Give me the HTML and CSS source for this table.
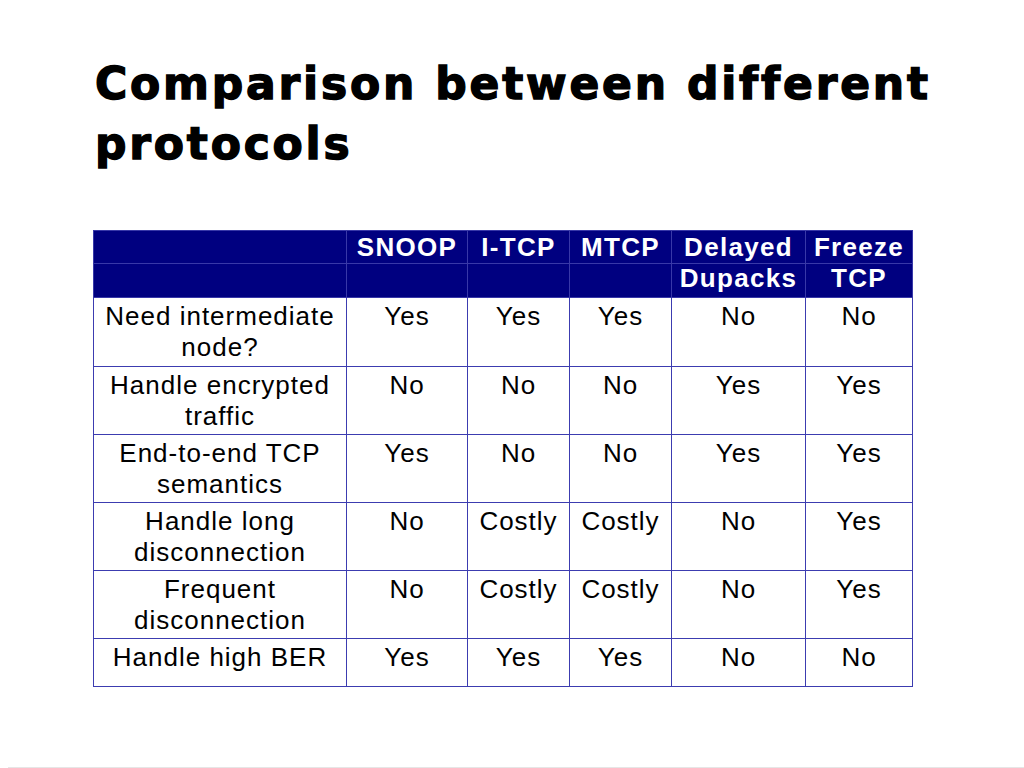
FILE: index.html
```html
<!DOCTYPE html>
<html>
<head>
<meta charset="utf-8">
<link rel="stylesheet" href="styles.css">
</head>
<body>
<div class="slide">
  <h1 class="title">Comparison between different<br>protocols</h1>
  <table class="cmp">
    <colgroup>
      <col class="c0"><col class="c1"><col class="c2"><col class="c3"><col class="c4"><col class="c5">
    </colgroup>
    <thead>
      <tr class="h1">
        <th></th><th>SNOOP</th><th>I-TCP</th><th>MTCP</th><th>Delayed</th><th>Freeze</th>
      </tr>
      <tr class="h2">
        <th></th><th></th><th></th><th></th><th>Dupacks</th><th>TCP</th>
      </tr>
    </thead>
    <tbody>
      <tr class="r2 first"><td>Need intermediate<br>node?</td><td>Yes</td><td>Yes</td><td>Yes</td><td>No</td><td>No</td></tr>
      <tr class="r2"><td>Handle encrypted<br>traffic</td><td>No</td><td>No</td><td>No</td><td>Yes</td><td>Yes</td></tr>
      <tr class="r2"><td>End-to-end TCP<br>semantics</td><td>Yes</td><td>No</td><td>No</td><td>Yes</td><td>Yes</td></tr>
      <tr class="r2"><td>Handle long<br>disconnection</td><td>No</td><td>Costly</td><td>Costly</td><td>No</td><td>Yes</td></tr>
      <tr class="r2"><td>Frequent<br>disconnection</td><td>No</td><td>Costly</td><td>Costly</td><td>No</td><td>Yes</td></tr>
      <tr class="r1"><td>Handle high BER</td><td>Yes</td><td>Yes</td><td>Yes</td><td>No</td><td>No</td></tr>
    </tbody>
  </table>
</div>
<div class="footer-line"></div>
</body>
</html>
```

FILE: styles.css
```css
html, body {
  margin: 0;
  padding: 0;
  background: #ffffff;
}
.slide {
  width: 1024px;
  height: 767px;
  box-sizing: border-box;
  padding-left: 93px;
  padding-top: 54px;
}
.title {
  margin: 0 0 56px 2px;
  font-family: "DejaVu Sans", "Liberation Sans", sans-serif;
  font-weight: 700;
  font-size: 44px;
  line-height: 60px;
  letter-spacing: 2.8px;
  color: #000000;
  -webkit-text-stroke: 1.4px #000;
  white-space: nowrap;
}
.cmp {
  border-collapse: collapse;
  table-layout: fixed;
  width: 819px;
  font-family: "Liberation Sans", Arial, sans-serif;
  font-size: 26px;
  line-height: 31px;
  letter-spacing: 1px;
  color: #000;
}
.c0 { width: 253px; }
.c1 { width: 121px; }
.c2 { width: 102px; }
.c3 { width: 102px; }
.c4 { width: 134px; }
.c5 { width: 107px; }
.cmp th {
  background: #000080;
  color: #ffffff;
  font-weight: 700;
  letter-spacing: 1.3px;
  border: 1px solid #3838a8;
  padding: 0 2px;
  text-align: center;
  vertical-align: top;
  white-space: nowrap;
}
.cmp .h1 th {
  height: 30px;
  padding-top: 1px;
  line-height: 31px;
}
.cmp .h2 th {
  height: 33px;
  line-height: 29px;
  vertical-align: top;
}
.cmp td {
  border: 1px solid #3c3cb0;
  padding: 3px 2px 0;
  text-align: center;
  vertical-align: top;
  white-space: nowrap;
}
.cmp .r2 td { height: 64px; }
.cmp .r2.first td { height: 65px; }
.cmp .r1 td { height: 44px; }
.footer-line {
  margin-left: 8px;
  height: 0;
  border-top: 1px solid #e6e6e6;
}
```
